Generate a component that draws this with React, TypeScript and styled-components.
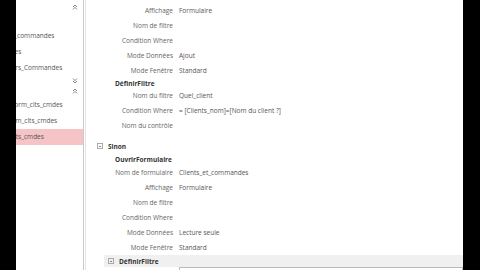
import React from 'react';
import styled, { createGlobalStyle } from 'styled-components';

const GlobalStyle = createGlobalStyle`
  html, body { margin: 0; padding: 0; background: #000; }
  body { font-family: "Open Sans", "Noto Sans", sans-serif; }
`;

type Field = { label: string; value?: string };

const blocA: Field[] = [
  { label: 'Affichage', value: 'Formulaire' },
  { label: 'Nom de filtre' },
  { label: 'Condition Where' },
  { label: 'Mode Données', value: 'Ajout' },
  { label: 'Mode Fenêtre', value: 'Standard' },
];

const filtreA: Field[] = [
  { label: 'Nom du filtre', value: 'Quel_client' },
  { label: 'Condition Where', value: '= [Clients_nom]=[Nom du client ?]' },
  { label: 'Nom du contrôle' },
];

const blocB: Field[] = [
  { label: 'Nom de formulaire', value: 'Clients_et_commandes' },
  { label: 'Affichage', value: 'Formulaire' },
  { label: 'Nom de filtre' },
  { label: 'Condition Where' },
  { label: 'Mode Données', value: 'Lecture seule' },
  { label: 'Mode Fenêtre', value: 'Standard' },
];

function Chevrons({ down }: { down?: boolean }) {
  return (
    <svg width="6" height="6" viewBox="0 0 6 6" style={{ transform: down ? 'rotate(180deg)' : undefined }}>
      <path d="M1 3 L3 1 L5 3 M1 5.4 L3 3.4 L5 5.4" fill="none" stroke="#777" strokeWidth="0.9" />
    </svg>
  );
}

function Rows({ fields }: { fields: Field[] }) {
  return (
    <>
      {fields.map((f, i) => (
        <Row key={i}>
          <Label>{f.label}</Label>
          <Value>{f.value ?? ''}</Value>
        </Row>
      ))}
    </>
  );
}

export default function App() {
  return (
    <Screen>
      <GlobalStyle />
      <Band $w={16} />
      <Nav>
        <NavHeader $h={14}>
          <Chevrons />
        </NavHeader>
        <NavGap $h={14} />
        <NavItem $shift={-31}>Clients_et_commandes</NavItem>
        <NavItem $shift={-33}>Commandes</NavItem>
        <NavItem $shift={-34}>Fournisseurs_Commandes</NavItem>
        <NavHeader $h={10}>
          <Chevrons down />
        </NavHeader>
        <NavHeader $h={10}>
          <Chevrons />
        </NavHeader>
        <NavGap $h={1} />
        <NavItem $shift={-5}>Form_clts_cmdes</NavItem>
        <NavItem $shift={-24}>Etat_form_clts_cmdes</NavItem>
        <NavItem $shift={-27} $selected>
          Macro_clts_cmdes
        </NavItem>
      </Nav>
      <Splitter />
      <Main>
        <Rows fields={blocA} />
        <Action $h={10}>DéfinirFiltre</Action>
        <Rows fields={filtreA} />
        <Branch>
          <Toggle />
          Sinon
        </Branch>
        <Action $h={12}>OuvrirFormulaire</Action>
        <Rows fields={blocB} />
        <ActiveAction>
          <Toggle />
          DéfinirFiltre
        </ActiveAction>
        <InputRow>
          <span />
          <TextBox />
        </InputRow>
      </Main>
      <Band $w={17} />
    </Screen>
  );
}

const Screen = styled.div`
  display: flex;
  width: 480px;
  height: 270px;
  overflow: hidden;
  background: #fff;
`;

const Band = styled.div<{ $w: number }>`
  flex: 0 0 ${(p) => p.$w}px;
  background: #000;
`;

const Nav = styled.div`
  flex: 0 0 67px;
  display: flex;
  flex-direction: column;
  overflow: hidden;
  background: #fff;
  font-size: 6.5px;
  color: #555;
  & > * { flex-shrink: 0; }
`;

const NavHeader = styled.div<{ $h: number }>`
  height: ${(p) => p.$h}px;
  display: flex;
  align-items: center;
  justify-content: flex-end;
  padding-right: 5px;
`;

const NavGap = styled.div<{ $h: number }>`
  height: ${(p) => p.$h}px;
`;

const NavItem = styled.div<{ $shift: number; $selected?: boolean }>`
  height: 16px;
  line-height: 16px;
  white-space: nowrap;
  text-indent: ${(p) => p.$shift}px;
  background: ${(p) => (p.$selected ? '#f6c3c7' : 'transparent')};
`;

const Splitter = styled.div`
  flex: 0 0 3px;
  background: #fff;
  border-left: 1px solid #c9c9c9;
  border-right: 1px solid #e4e4e4;
  box-sizing: border-box;
`;

const Main = styled.div`
  flex: 1;
  display: flex;
  flex-direction: column;
  overflow: hidden;
  padding-top: 3px;
  background: #fff;
  font-size: 6.5px;
  color: #555;
  & > * { flex-shrink: 0; }
`;

const Row = styled.div`
  display: grid;
  grid-template-columns: 87px 1fr;
  column-gap: 6px;
  height: 15px;
  align-items: center;
  white-space: nowrap;
`;

const Label = styled.span`
  text-align: right;
  color: #666;
`;

const Value = styled.span`
  color: #555;
`;

const Action = styled.div<{ $h: number }>`
  height: ${(p) => p.$h}px;
  display: flex;
  align-items: center;
  padding-left: 29px;
  font-weight: 700;
  color: #333;
`;

const Toggle = styled.span`
  width: 4px;
  height: 4px;
  margin-right: 5px;
  border: 1px solid #aaa;
  position: relative;
  &::after {
    content: '';
    position: absolute;
    left: 1px;
    right: 1px;
    top: 2px;
    height: 1px;
    background: #888;
  }
`;

const Branch = styled.div`
  height: 14px;
  margin-top: 6px;
  display: flex;
  align-items: center;
  padding-left: 11px;
  font-weight: 700;
  color: #333;
`;

const ActiveAction = styled.div`
  height: 12px;
  display: flex;
  align-items: center;
  margin-left: 18px;
  padding-left: 4px;
  background: #f0f0f0;
  font-weight: 700;
  color: #333;
`;

const InputRow = styled.div`
  display: grid;
  grid-template-columns: 87px 1fr;
  column-gap: 6px;
`;

const TextBox = styled.div`
  height: 10px;
  border: 1px solid #bbb;
  background: #fff;
`;
